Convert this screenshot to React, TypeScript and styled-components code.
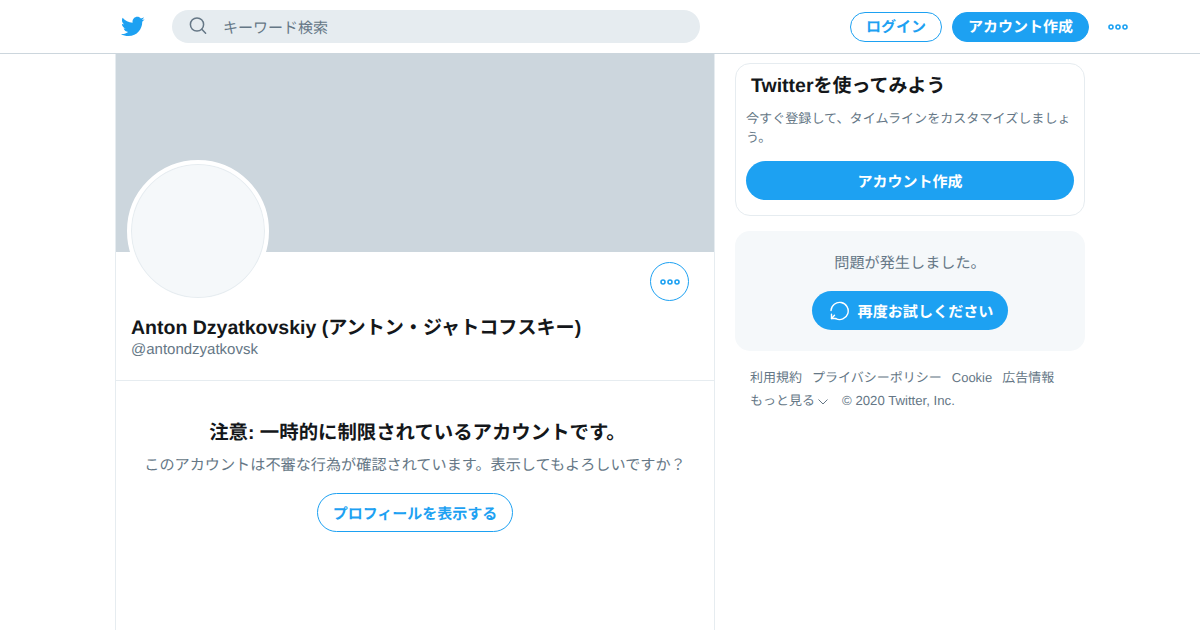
import React from 'react';
import styled, { createGlobalStyle } from 'styled-components';

const blue = 'rgb(29, 161, 242)';
const grey = 'rgb(101, 119, 134)';
const ink = 'rgb(20, 23, 26)';

const GlobalStyle = createGlobalStyle`
  html, body {
    margin: 0;
    padding: 0;
    background: #fff;
    overflow: hidden;
    font-family: "Liberation Sans", "Noto Sans CJK JP", sans-serif;
    color: ${ink};
    text-rendering: geometricPrecision;
  }
  button { text-rendering: geometricPrecision; }
  * { box-sizing: border-box; }
`;

const Page = styled.div`
  width: 1200px;
  height: 630px;
  overflow: hidden;
`;

const Header = styled.header`
  height: 54px;
  border-bottom: 1px solid rgb(204, 214, 221);
  display: flex;
  align-items: center;
  padding: 0 72px 0 120px;
`;

const Logo = styled.svg`
  width: 25px;
  height: 25px;
  fill: ${blue};
  flex: none;
  margin-right: 27px;
`;

const Search = styled.div`
  width: 528px;
  height: 33px;
  border-radius: 17px;
  background: rgb(230, 236, 240);
  display: flex;
  align-items: center;
  padding: 2px 0 0 17px;
  gap: 16px;
  font-size: 15px;
  color: ${grey};
`;

const SearchIcon = styled.svg`
  width: 18px;
  height: 18px;
  margin-top: -3px;
  fill: none;
  stroke: ${grey};
  stroke-width: 1.5;
  stroke-linecap: round;
  flex: none;
`;

const HeaderActions = styled.div`
  margin-left: auto;
  display: flex;
  align-items: center;
`;

const Pill = styled.button<{ $solid?: boolean }>`
  height: 30px;
  padding: 2px 15px 0;
  border-radius: 15px;
  border: 1px solid ${blue};
  background: ${p => (p.$solid ? blue : '#fff')};
  color: ${p => (p.$solid ? '#fff' : blue)};
  font: bold 15px "Liberation Sans", "Noto Sans CJK JP", sans-serif;
  line-height: 1;
  white-space: nowrap;
  margin-left: 10px;
`;

const Dots = styled.svg`
  display: block;
  width: 20px;
  height: 6px;
  fill: none;
  stroke: ${blue};
  stroke-width: 1.6;
  flex: none;
`;

const HeaderDots = styled.div`
  margin-left: 19px;
`;

const Body = styled.div`
  display: flex;
  align-items: flex-start;
  padding-left: 115px;
  gap: 20px;
`;

const Main = styled.main`
  width: 600px;
  height: 576px;
  border-left: 1px solid rgb(230, 236, 240);
  border-right: 1px solid rgb(230, 236, 240);
  position: relative;
`;

const Banner = styled.div`
  height: 198px;
  background: rgb(204, 214, 221);
`;

const Avatar = styled.div`
  position: absolute;
  left: 11px;
  top: 106px;
  width: 142px;
  height: 142px;
  border-radius: 50%;
  background: rgb(245, 248, 250);
  border: 4px solid #fff;
  box-shadow: inset 0 0 0 1px rgb(230, 236, 240);
`;

const ProfileHead = styled.section`
  height: 129px;
  border-bottom: 1px solid rgb(230, 236, 240);
  padding: 10px 25px 0 15px;
`;

const MoreRow = styled.div`
  display: flex;
  justify-content: flex-end;
`;

const MoreButton = styled.div`
  width: 39px;
  height: 39px;
  border: 1px solid ${blue};
  border-radius: 50%;
  display: flex;
  align-items: center;
  justify-content: center;
`;

const Name = styled.h1`
  margin: 14px 0 0;
  font-size: 19.1px;
  line-height: 26px;
  font-weight: bold;
  white-space: nowrap;
`;

const Latin = styled.span`
  font-size: 19.5px;
`;

const Handle = styled.div`
  font-size: 15px;
  line-height: 16px;
  color: ${grey};
`;

const Notice = styled.section`
  padding-top: 39px;
  display: flex;
  flex-direction: column;
  align-items: center;
`;

const NoticeTitle = styled.h2`
  margin: 0;
  padding-left: 5px;
  font-size: 19.4px;
  line-height: 26px;
  font-weight: bold;
`;

const NoticeText = styled.p`
  margin: 10px 0 0;
  font-size: 15.15px;
  line-height: 20px;
  color: ${grey};
`;

const ShowButton = styled.button`
  margin-top: 17px;
  height: 39px;
  padding: 1px 15px 0;
  border-radius: 20px;
  border: 1px solid ${blue};
  background: #fff;
  color: ${blue};
  font: bold 15px "Liberation Sans", "Noto Sans CJK JP", sans-serif;
`;

const Side = styled.aside`
  width: 350px;
  padding-top: 9px;
`;

const SignupCard = styled.section`
  height: 153px;
  border: 1px solid rgb(230, 236, 240);
  border-radius: 15px;
  padding: 9px 10px 0;
`;

const SignupTitle = styled.h2`
  margin: 0 0 0 5px;
  font-size: 19px;
  line-height: 26px;
  font-weight: bold;
`;

const SignupText = styled.p`
  margin: 9px 0 0;
  font-size: 13.08px;
  line-height: 19px;
  color: ${grey};
`;

const WideButton = styled.button`
  display: block;
  width: 100%;
  height: 39px;
  margin-top: 14px;
  padding-top: 2px;
  border: 0;
  border-radius: 20px;
  background: ${blue};
  color: #fff;
  font: bold 15px "Liberation Sans", "Noto Sans CJK JP", sans-serif;
`;

const ErrorCard = styled.section`
  margin-top: 15px;
  height: 120px;
  border-radius: 15px;
  background: rgb(245, 248, 250);
  padding-top: 22px;
  display: flex;
  flex-direction: column;
  align-items: center;
`;

const ErrorText = styled.div`
  font-size: 15.15px;
  line-height: 21px;
  color: ${grey};
`;

const RetryButton = styled.button`
  margin-top: 17px;
  height: 39px;
  padding: 0 15px 0 18px;
  border: 0;
  border-radius: 20px;
  background: ${blue};
  color: #fff;
  display: flex;
  align-items: center;
  gap: 8px;
  font: bold 15.1px "Liberation Sans", "Noto Sans CJK JP", sans-serif;
`;

const RetryLabel = styled.span`
  padding-top: 1px;
`;

const RetryIcon = styled.svg`
  width: 20px;
  height: 20px;
  fill: none;
  stroke: #fff;
  stroke-width: 1.4;
  stroke-linecap: round;
  stroke-linejoin: round;
  flex: none;
`;

const Footer = styled.footer`
  padding: 15px 15px 0;
  font-size: 13px;
  line-height: 23px;
  color: ${grey};
`;

const FooterRow = styled.div`
  display: flex;
  align-items: center;
  gap: 10px;
  white-space: nowrap;
`;

const MoreLink = styled.span`
  display: inline-flex;
  align-items: center;
  gap: 3px;
  margin-right: 4px;
`;

const Copyright = styled.span`
  font-size: 13.2px;
`;

const Chevron = styled.svg`
  width: 10px;
  height: 6px;
  margin-top: 2px;
  fill: none;
  stroke: ${grey};
  stroke-width: 1;
`;

const DotsIcon = () => (
  <Dots viewBox="0 0 20 6">
    <circle cx="3" cy="3" r="2" />
    <circle cx="10" cy="3" r="2" />
    <circle cx="17" cy="3" r="2" />
  </Dots>
);

const App = () => (
  <Page>
    <GlobalStyle />
    <Header>
      <Logo viewBox="0 0 24 24">
        <path d="M23.643 4.937c-.835.37-1.732.62-2.675.733.962-.576 1.7-1.49 2.048-2.578-.9.534-1.897.922-2.958 1.13-.85-.904-2.06-1.47-3.4-1.47-2.572 0-4.658 2.086-4.658 4.66 0 .364.042.718.12 1.06-3.873-.195-7.304-2.05-9.602-4.868-.4.69-.63 1.49-.63 2.342 0 1.616.823 3.043 2.072 3.878-.764-.025-1.482-.234-2.11-.583v.06c0 2.257 1.605 4.14 3.737 4.568-.392.106-.803.162-1.227.162-.3 0-.593-.028-.877-.082.593 1.85 2.313 3.198 4.352 3.234-1.595 1.25-3.604 1.995-5.786 1.995-.376 0-.747-.022-1.112-.065 2.062 1.323 4.51 2.093 7.14 2.093 8.57 0 13.255-7.098 13.255-13.254 0-.2-.005-.402-.014-.602.91-.658 1.7-1.477 2.323-2.41z" />
      </Logo>
      <Search>
        <SearchIcon viewBox="0 0 18 18">
          <circle cx="8" cy="7.5" r="6.6" />
          <path d="M12.8 12.3l3.8 4" />
        </SearchIcon>
        キーワード検索
      </Search>
      <HeaderActions>
        <Pill>ログイン</Pill>
        <Pill $solid>アカウント作成</Pill>
        <HeaderDots>
          <DotsIcon />
        </HeaderDots>
      </HeaderActions>
    </Header>
    <Body>
      <Main>
        <Banner />
        <Avatar />
        <ProfileHead>
          <MoreRow>
            <MoreButton>
              <DotsIcon />
            </MoreButton>
          </MoreRow>
          <Name><Latin>Anton Dzyatkovskiy (</Latin>アントン・ジャトコフスキー<Latin>)</Latin></Name>
          <Handle>@antondzyatkovsk</Handle>
        </ProfileHead>
        <Notice>
          <NoticeTitle>注意: 一時的に制限されているアカウントです。</NoticeTitle>
          <NoticeText>このアカウントは不審な行為が確認されています。表示してもよろしいですか？</NoticeText>
          <ShowButton>プロフィールを表示する</ShowButton>
        </Notice>
      </Main>
      <Side>
        <SignupCard>
          <SignupTitle><Latin>Twitter</Latin>を使ってみよう</SignupTitle>
          <SignupText>今すぐ登録して、タイムラインをカスタマイズしましょう。</SignupText>
          <WideButton>アカウント作成</WideButton>
        </SignupCard>
        <ErrorCard>
          <ErrorText>問題が発生しました。</ErrorText>
          <RetryButton>
            <RetryIcon viewBox="0 0 20 20">
              <path d="M1 9.500A8.600 8.600 0 1 1 5.800 17.700" />
              <path d="M1.500 13.200V17.500H6" />
              <path d="M1.500 17.500L4.500 14.300" />
            </RetryIcon>
            <RetryLabel>再度お試しください</RetryLabel>
          </RetryButton>
        </ErrorCard>
        <Footer>
          <FooterRow>
            <span>利用規約</span>
            <span>プライバシーポリシー</span>
            <span>Cookie</span>
            <span>広告情報</span>
          </FooterRow>
          <FooterRow>
            <MoreLink>
              もっと見る
              <Chevron viewBox="0 0 10 6">
                <path d="M.5.5L5 5 9.500.5" />
              </Chevron>
            </MoreLink>
            <Copyright>© 2020 Twitter, Inc.</Copyright>
          </FooterRow>
        </Footer>
      </Side>
    </Body>
  </Page>
);

export default App;
